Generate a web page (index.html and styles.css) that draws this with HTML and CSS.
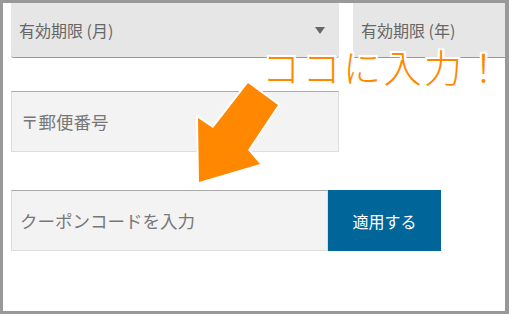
FILE: index.html
```html
<!DOCTYPE html>
<html lang="ja">

<head>
    <meta charset="UTF-8">
    <meta name="viewport" content="width=device-width, initial-scale=1.0">
    <title>クーポン入力</title>
    <link rel="stylesheet" href="styles.css">
</head>

<body>
    <div class="frame">
        <div class="row selects">
            <div class="select month">
                <span>有効期限 (月)</span>
                <span class="caret"></span>
            </div>
            <div class="select year">
                <span>有効期限 (年)</span>
            </div>
        </div>
        <div class="field postal">〒郵便番号</div>
        <div class="row coupon">
            <div class="field code">クーポンコードを入力</div>
            <div class="apply">適用する</div>
        </div>

        <div class="note">ココに入力！</div>
        <svg class="arrow" width="503" height="308" viewBox="0 0 503 308">
            <polygon points="245,80 275,102 245,147 257,161 196,179 195,115 210,125"
                fill="#ff8800" stroke="#fff" stroke-width="4" stroke-linejoin="miter" paint-order="stroke" />
        </svg>
    </div>
</body>

</html>
```

FILE: styles.css
```css
body {
    margin: 0;
    padding: 0;
}

.frame {
    width: 509px;
    height: 314px;
    box-sizing: border-box;
    border: 3px solid #999;
    border-right-width: 4px;
    background-color: #fff;
    padding-left: 8px;
    position: relative;
    overflow: hidden;
    font-family: "Noto Sans CJK JP", "Noto Sans", sans-serif;
}

.row {
    display: flex;
}

.selects {
    gap: 14px;
}

.select {
    height: 55px;
    box-sizing: border-box;
    background-color: #e6e6e6;
    border-bottom: 1px solid #999;
    border-radius: 0 0 3px 3px;
    display: flex;
    align-items: center;
    justify-content: space-between;
    padding: 0 14px 0 8px;
    font-size: 16px;
    color: #666;
    flex-shrink: 0;
}

.month {
    width: 328px;
}

.year {
    width: 200px;
    border-radius: 0;
}

.caret {
    width: 0;
    height: 0;
    border-left: 5px solid transparent;
    border-right: 5px solid transparent;
    border-top: 7px solid #666;
    margin-top: 1px;
}

.field {
    height: 61px;
    box-sizing: border-box;
    background-color: #f3f3f3;
    border: 1px solid #ddd;
    border-top-color: #aaa;
    display: flex;
    align-items: center;
    padding-left: 9px;
    font-size: 17.5px;
    color: #777;
}

.postal {
    width: 328px;
    margin-top: 33px;
}

.coupon {
    margin-top: 38px;
}

.code {
    width: 317px;
    padding-left: 8px;
}

.apply {
    width: 113px;
    height: 61px;
    background-color: #006699;
    color: #fff;
    font-size: 16px;
    display: flex;
    align-items: center;
    justify-content: center;
}

.note {
    position: absolute;
    left: 259px;
    top: 44px;
    font-size: 38px;
    line-height: 1;
    letter-spacing: 2.5px;
    font-weight: 300;
    color: #ff8800;
    white-space: nowrap;
    text-shadow:
        2px 0 0 #fff, -2px 0 0 #fff, 0 2px 0 #fff, 0 -2px 0 #fff,
        2px 2px 0 #fff, -2px 2px 0 #fff, 2px -2px 0 #fff, -2px -2px 0 #fff;
}

.arrow {
    position: absolute;
    left: 0;
    top: 0;
}
```
